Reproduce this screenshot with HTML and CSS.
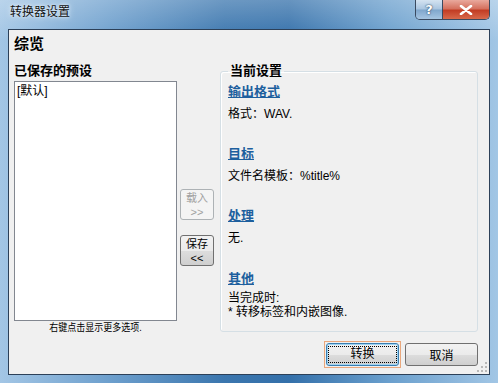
FILE: index.html
```html
<!DOCTYPE html>
<html lang="zh-CN">
<head>
  <meta charset="UTF-8">
  <title>转换器设置</title>
  <link rel="stylesheet" href="styles.css">
</head>
<body>

  <div class="window">
    <div class="titlebar">
      <span class="title">转换器设置</span>
      <div class="caption">
        <span class="cap-btn help">?</span>
        <span class="cap-btn close">
          <svg width="14" height="10" viewBox="0 0 14 10">
            <path d="M2 1 L12 9 M12 1 L2 9" stroke="#fff" stroke-width="2.6" stroke-linecap="round"/>
          </svg>
        </span>
      </div>
    </div>

    <div class="client">
      <h1>综览</h1>

      <div class="main">
        <div class="presets">
          <div class="label">已保存的预设</div>
          <div class="listbox">
            <div class="item">[默认]</div>
          </div>
          <div class="hint">右键点击显示更多选项.</div>
        </div>

        <div class="movers">
          <button class="btn small" disabled><span class="line">载入</span><span class="line">&gt;&gt;</span></button>
          <button class="btn small"><span class="line">保存</span><span class="line">&lt;&lt;</span></button>
        </div>

        <fieldset class="current">
          <legend>当前设置</legend>

          <div class="section">
            <a href="#" class="link">输出格式</a>
            <div class="text">格式：WAV.</div>
          </div>
          <div class="section">
            <a href="#" class="link">目标</a>
            <div class="text">文件名模板：%title%</div>
          </div>
          <div class="section tall">
            <a href="#" class="link">处理</a>
            <div class="text">无.</div>
          </div>
          <div class="section">
            <a href="#" class="link">其他</a>
            <div class="text multi">当完成时:</div>
            <div class="text multi next">* 转移标签和内嵌图像.</div>
          </div>
        </fieldset>
      </div>

      <div class="actions">
        <span class="focus-ring"><button class="btn wide default"><span class="dotted">转换</span></button></span>
        <button class="btn wide">取消</button>
      </div>

      <svg class="grip" width="10" height="10" viewBox="0 0 10 10">
        <g fill="#b8b8b8">
          <rect x="8" y="0" width="2" height="2"/>
          <rect x="4" y="4" width="2" height="2"/>
          <rect x="8" y="4" width="2" height="2"/>
          <rect x="0" y="8" width="2" height="2"/>
          <rect x="4" y="8" width="2" height="2"/>
          <rect x="8" y="8" width="2" height="2"/>
        </g>
      </svg>
    </div>
  </div>

</body>
</html>
```

FILE: styles.css
```css
html, body {
  margin: 0;
  padding: 0;
}
body {
  width: 498px;
  height: 383px;
  overflow: hidden;
  font-family: "Liberation Sans", "Noto Sans CJK SC", sans-serif;
  font-size: 12px;
  color: #000;
}
.window {
  height: 383px;
  box-sizing: border-box;
  padding: 0 8px 8px 8px;
  display: flex;
  flex-direction: column;
  background:
    linear-gradient(to bottom, rgba(255,255,255,0.25), rgba(255,255,255,0) 40px),
    linear-gradient(to right, #a3c6e5 0%, #6d9fcd 22%, #3b76ae 45%, #3470aa 58%, #6a9fcd 78%, #a2c6e5 100%);
}
.titlebar {
  height: 29px;
  display: flex;
  align-items: flex-start;
}
.title {
  margin-top: 4px;
  margin-left: 2px;
  font-size: 12px;
  line-height: 16px;
  color: #111;
  text-shadow: 0 0 6px #e8f1fa, 0 0 3px #e8f1fa;
}
.caption {
  margin-left: auto;
  display: flex;
  border: 1px solid #3a4a60;
  border-top: none;
  border-radius: 0 0 5px 5px;
  overflow: hidden;
}
.cap-btn {
  height: 19px;
  display: flex;
  align-items: center;
  justify-content: center;
}
.help {
  width: 26px;
  border-right: 1px solid #3a4a60;
  background: linear-gradient(to bottom, #d4e3f1 0%, #a9c5e0 48%, #7fa6cc 52%, #a6c5e2 100%);
  font-family: "DejaVu Sans", sans-serif;
  font-weight: bold;
  font-size: 13px;
  color: #fff;
  text-shadow: 0 0 2px #2b4a6b, 0 0 1px #2b4a6b;
}
.close {
  width: 46px;
  background: linear-gradient(to bottom, #e9a99d 0%, #d5715f 45%, #c23d24 55%, #d8694b 100%);
}
.client {
  flex: 1;
  position: relative;
  background: #f0f0f0;
  border: 1px solid #2c4058;
  padding: 5px 11px 0 5px;
}
h1 {
  margin: 0;
  font-size: 15px;
  line-height: 18px;
  font-weight: bold;
}
.main {
  margin-top: 8px;
  display: flex;
  align-items: flex-start;
}
.presets {
  width: 163px;
}
.label {
  font-size: 13px;
  font-weight: bold;
  line-height: 20px;
}
.listbox {
  height: 238px;
  background: #fff;
  border: 1px solid #828790;
}
.item {
  padding-left: 2px;
  line-height: 18px;
}
.hint {
  margin-top: 1px;
  text-align: center;
  font-size: 10px;
  line-height: 12px;
  transform: scaleX(0.9);
}
.movers {
  width: 34px;
  margin-left: 3px;
  padding-top: 128px;
  display: flex;
  flex-direction: column;
  gap: 15px;
}
.btn {
  font-family: "Liberation Sans", "Noto Sans CJK SC", sans-serif;
  font-size: 12px;
  color: #000;
  border: 1px solid #707070;
  border-radius: 3px;
  background: linear-gradient(to bottom, #f2f2f2 0%, #ebebeb 50%, #dddddd 51%, #cfcfcf 100%);
  padding: 0;
  margin: 0;
}
.btn.small {
  width: 34px;
  height: 31px;
  display: flex;
  flex-direction: column;
  align-items: center;
  justify-content: center;
}
.btn.small .line {
  display: block;
  font-size: 11px;
  line-height: 14px;
  height: 14px;
}
.btn:disabled {
  color: #a0a0a0;
  border-color: #adb2b5;
  background: #f4f4f4;
}
.current {
  flex: 1;
  margin: 1px 0 0 6px;
  padding: 0 7px;
  height: 270px;
  box-sizing: border-box;
  border: 1px solid #d5dfe5;
  border-radius: 3px;
  box-shadow: inset 1px 1px 0 #fff;
}
.current legend {
  padding: 0 2px;
  font-size: 13px;
  font-weight: bold;
  line-height: 18px;
}
.section {
  height: 62px;
}
.section:first-of-type {
  margin-top: 2px;
}
.section.tall {
  height: 63px;
}
.link {
  display: block;
  font-size: 13px;
  font-weight: bold;
  line-height: 20px;
  color: #1d5f9e;
  text-decoration: underline;
}
.text {
  margin-top: 2px;
  line-height: 20px;
}
.text.multi {
  margin-top: 2px;
  line-height: 14px;
  height: 14px;
}
.text.multi.next {
  margin-top: 0;
}
.actions {
  margin-top: 7px;
  display: flex;
  justify-content: flex-end;
  align-items: center;
  gap: 4px;
}
.focus-ring {
  display: flex;
  padding: 1px;
  border: 1px solid #e9a77c;
}
.btn.wide {
  width: 73px;
  height: 23px;
}
.btn.default {
  border-color: #3c7fb1;
  box-shadow: inset 0 0 0 1px #9fd4f3;
}
.dotted {
  display: inline-block;
  padding: 0 21px;
  line-height: 15px;
  outline: 1px dotted #000;
}
.grip {
  position: absolute;
  right: 2px;
  bottom: 2px;
}
```
